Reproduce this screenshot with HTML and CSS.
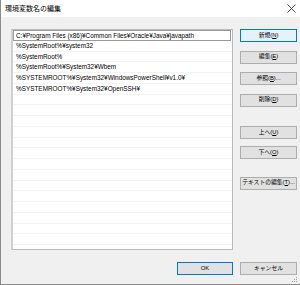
FILE: index.html
```html
<!DOCTYPE html>
<html lang="ja">
<head>
    <meta charset="UTF-8">
    <title>環境変数名の編集</title>
    <link rel="stylesheet" href="styles.css">
</head>
<body>
    <div class="window">
        <div class="titlebar">
            <span class="title">環境変数名の編集</span>
            <span class="close">
                <svg width="9" height="9" viewBox="0 0 9 9"><path d="M0.5 0.5 L8.5 8.5 M8.5 0.5 L0.5 8.5" stroke="#333" stroke-width="0.9" fill="none"/></svg>
            </span>
        </div>

        <div class="content">
            <div class="list">
                <div class="row selected">C:¥Program Files (x86)¥Common Files¥Oracle¥Java¥javapath</div>
                <div class="row">%SystemRoot%¥system32</div>
                <div class="row">%SystemRoot%</div>
                <div class="row">%SystemRoot%¥System32¥Wbem</div>
                <div class="row">%SYSTEMROOT%¥System32¥WindowsPowerShell¥v1.0¥</div>
                <div class="row">%SYSTEMROOT%¥System32¥OpenSSH¥</div>
                <div class="row"></div>
                <div class="row"></div>
                <div class="row"></div>
                <div class="row"></div>
                <div class="row"></div>
                <div class="row"></div>
                <div class="row"></div>
                <div class="row"></div>
                <div class="row"></div>
                <div class="row"></div>
                <div class="row"></div>
                <div class="row"></div>
                <div class="row"></div>
                <div class="row"></div>
            </div>

            <div class="side">
                <button class="btn active">新規(<u>N</u>)</button>
                <button class="btn">編集(<u>E</u>)</button>
                <button class="btn">参照(<u>B</u>)...</button>
                <button class="btn">削除(<u>D</u>)</button>
                <button class="btn gap">上へ(<u>U</u>)</button>
                <button class="btn near">下へ(<u>O</u>)</button>
                <button class="btn gap2">テキストの編集(<u>T</u>)...</button>
            </div>
        </div>

        <div class="footer">
            <button class="btn ok">OK</button>
            <button class="btn">キャンセル</button>
        </div>
        <div class="grip">
            <svg width="6" height="6" viewBox="0 0 6 6">
                <rect x="4" y="0" width="1" height="1" fill="#a0a0a0"/>
                <rect x="2" y="2" width="1" height="1" fill="#a0a0a0"/>
                <rect x="4" y="2" width="1" height="1" fill="#a0a0a0"/>
                <rect x="0" y="4" width="1" height="1" fill="#a0a0a0"/>
                <rect x="2" y="4" width="1" height="1" fill="#a0a0a0"/>
                <rect x="4" y="4" width="1" height="1" fill="#a0a0a0"/>
            </svg>
        </div>
    </div>
</body>
</html>
```

FILE: styles.css
```css
html {
    overflow: hidden;
}

body {
    margin: 0;
    padding: 0;
    width: 300px;
    height: 285px;
    overflow: hidden;
    font-family: "Liberation Sans", "Noto Sans CJK JP", sans-serif;
    color: #000;
}

svg {
    display: block;
}

.window {
    position: relative;
    width: 300px;
    height: 285px;
    box-sizing: border-box;
    background-color: #f0f0f0;
    border-left: 1px solid #8c8c8c;
    border-bottom: 1px solid #8c8c8c;
    display: flex;
    flex-direction: column;
}

.titlebar {
    height: 17px;
    background-color: #fff;
    display: flex;
    align-items: center;
    justify-content: space-between;
    padding-left: 4px;
    padding-right: 4px;
}

.title {
    font-size: 7px;
    line-height: 1;
}

.close {
    display: flex;
    width: 9px;
    height: 9px;
}

.content {
    display: flex;
    padding: 12px 0 0 10px;
}

.list {
    width: 222px;
    height: 221px;
    box-sizing: border-box;
    background-color: #fff;
    border: 1px solid #b9b9b9;
    border-left-color: #cfcfcf;
    border-left-width: 2px;
}

.row {
    height: 10.75px;
    box-sizing: border-box;
    border-bottom: 1px solid #f3f3f3;
    font-size: 6.4px;
    line-height: 10px;
    padding-left: 3px;
    white-space: nowrap;
    overflow: hidden;
}

.row.selected {
    border: 1px solid #9a9a9a;
    margin-right: 1px;
    padding-left: 2px;
    line-height: 9px;
}

.side {
    display: flex;
    flex-direction: column;
    margin-left: 7px;
    width: 57px;
    gap: 8.5px;
}

.btn {
    height: 13px;
    width: 57px;
    box-sizing: border-box;
    padding: 0;
    background-color: #e1e1e1;
    border: 1px solid #adadad;
    font-family: "Liberation Sans", "Noto Sans CJK JP", sans-serif;
    font-size: 5.8px;
    line-height: 1;
    color: #000;
    white-space: nowrap;
}

.btn.active {
    background-color: #e5f1fb;
    border-color: #0078d7;
}

.btn.gap {
    margin-top: 11px;
}

.btn.near {
    margin-top: -1.5px;
}

.btn.gap2 {
    margin-top: 9px;
}

.footer {
    display: flex;
    justify-content: flex-end;
    gap: 7px;
    padding-right: 3px;
    margin-top: 12px;
}

.btn.ok {
    width: 56px;
    border-color: #0078d7;
}

.grip {
    position: absolute;
    right: 2px;
    bottom: 1px;
    width: 6px;
    height: 6px;
}
```
